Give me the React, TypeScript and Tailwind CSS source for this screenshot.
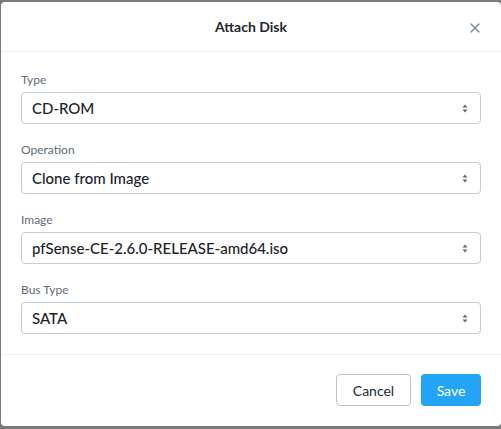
import { X } from "lucide-react";

const fields = [
  { label: "Type", value: "CD-ROM" },
  { label: "Operation", value: "Clone from Image" },
  { label: "Image", value: "pfSense-CE-2.6.0-RELEASE-amd64.iso" },
  { label: "Bus Type", value: "SATA" },
];

function SortIcon() {
  return (
    <svg width="6" height="9" viewBox="0 0 6 9" className="text-[#5b6878]">
      <path d="M3 0.5 L5.5 3.5 H0.5 Z" fill="currentColor" />
      <path d="M3 8.5 L5.5 5.5 H0.5 Z" fill="currentColor" />
    </svg>
  );
}

function Field({ label, value }: { label: string; value: string }) {
  return (
    <div className="flex flex-col">
      <label className="text-[12px] leading-4 mb-1 text-[#5f6c7b]">{label}</label>
      <div className="h-8 flex items-center justify-between rounded-[4px] border border-[#c5ccd5] pl-[10px] pr-[12px]">
        <span className="text-[15px] font-medium text-[#1b222c]">{value}</span>
        <SortIcon />
      </div>
    </div>
  );
}

export default function App() {
  return (
    <div
      className="w-[501px] h-[429px] bg-[#7b7b7b] pt-[2px] pl-[1px] overflow-hidden"
      style={{ fontFamily: "Lato, 'Open Sans', sans-serif" }}
    >
      <div className="w-[500px] h-[424px] bg-white rounded-[4px] flex flex-col">
        <div className="relative h-[50px] flex items-center justify-center border-b border-[#eceff2]">
          <span className="text-[14px] font-bold text-[#1f2630]">Attach Disk</span>
          <X className="absolute right-[18px] top-[18px] text-[#7d8b99]" size={16} strokeWidth={2} />
        </div>
        <div className="flex flex-col gap-[18px] px-5 pt-5 pb-5 border-b border-[#eceff2]">
          {fields.map((f) => (
            <Field key={f.label} label={f.label} value={f.value} />
          ))}
        </div>
        <div className="flex justify-end gap-[10px] px-5 pt-[19px]">
          <button className="h-8 w-[75px] rounded-[4px] border border-[#bcc3cc] bg-white text-[14px] text-[#222a33]">
            Cancel
          </button>
          <button className="h-8 w-[60px] rounded-[4px] bg-[#22a5f6] text-[14px] text-white">
            Save
          </button>
        </div>
      </div>
    </div>
  );
}
